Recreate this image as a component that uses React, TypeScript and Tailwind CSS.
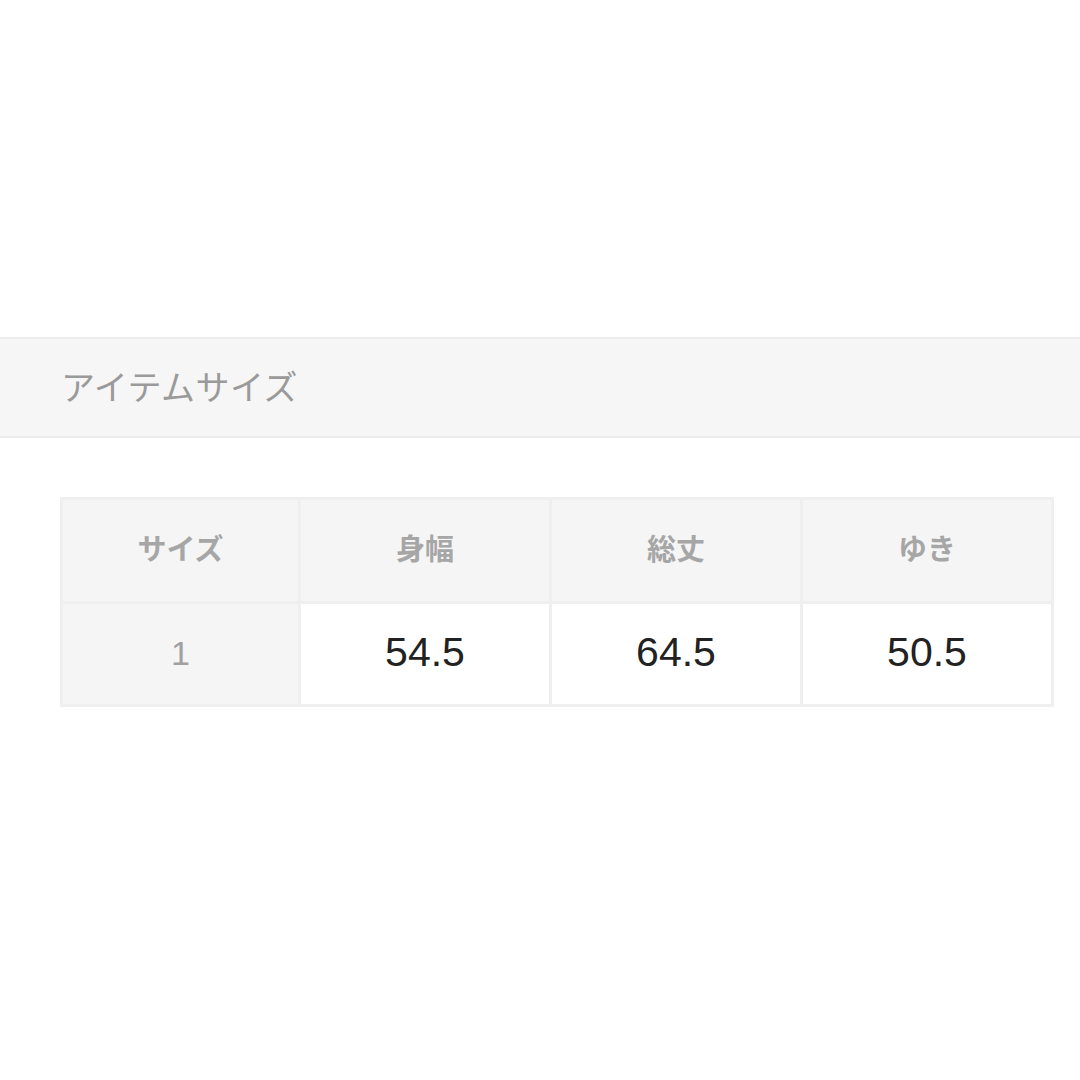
export default function App() {
  const jp = { fontFamily: '"Noto Sans CJK JP", "Noto Sans", sans-serif' };
  const num = { fontFamily: '"Liberation Sans", Arial, sans-serif' };
  const headers = ["サイズ", "身幅", "総丈", "ゆき"];
  const values = ["54.5", "64.5", "50.5"];
  return (
    <div className="w-[1080px] h-[1080px] bg-white flex flex-col">
      <div className="h-[337px]" />
      <div className="h-[101px] bg-[#f6f6f6] border-y-[2px] border-[#ececec] flex items-center pl-[61px] pb-[4px]">
        <span className="text-[34px] text-[#9a9a9a] leading-none tracking-[0.5px]" style={jp}>
          アイテムサイズ
        </span>
      </div>
      <div className="pt-[59px] pl-[60px]">
        <div className="w-[994px] grid grid-cols-[235px_248px_248px_248px] gap-[3px] p-[3px] bg-[#efefef]">
          {headers.map((h) => (
            <div key={h} className="h-[101px] bg-[#f5f5f5] flex items-center justify-center pb-[6px]">
              <span className="text-[29px] font-bold text-[#a6a6a6] leading-none" style={jp}>
                {h}
              </span>
            </div>
          ))}
          <div className="h-[100px] bg-[#f5f5f5] flex items-center justify-center pb-[3px]">
            <span className="text-[34px] text-[#a0a0a0] leading-none" style={num}>1</span>
          </div>
          {values.map((v) => (
            <div key={v} className="h-[100px] bg-white flex items-center justify-center pb-[3px]">
              <span className="text-[41px] text-[#222222] leading-none" style={num}>{v}</span>
            </div>
          ))}
        </div>
      </div>
    </div>
  );
}
